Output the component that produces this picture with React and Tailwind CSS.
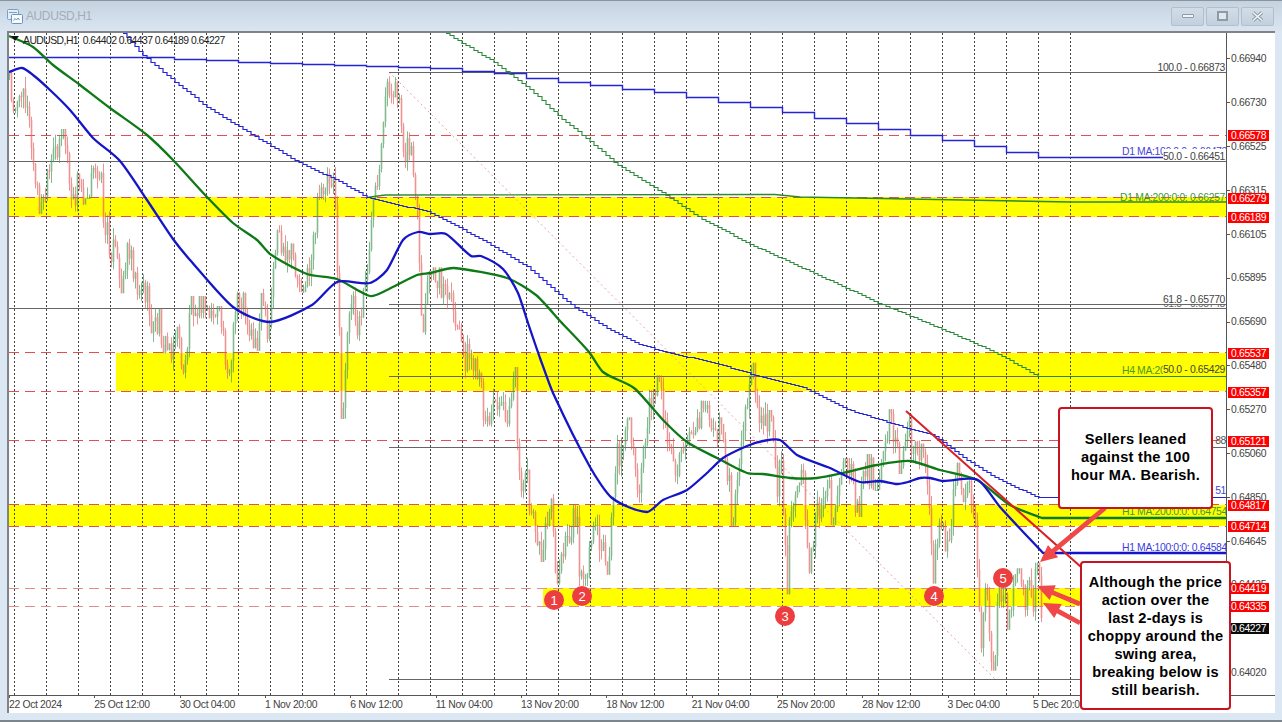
import React from "react";

const candleWay = [[9,75],[13,100],[20,110],[22,70],[27,110],[30,130],[35,185],[42,212],[50,175],[58,140],[62,132],[67,150],[70,185],[72,215],[78,180],[85,195],[93,180],[100,163],[105,235],[107,235],[117,260],[120,295],[130,240],[137,285],[145,290],[153,330],[160,320],[165,350],[170,345],[180,330],[183,388],[187,350],[190,300],[200,300],[210,315],[220,310],[230,382],[237,295],[245,305],[252,340],[258,345],[262,290],[268,352],[275,250],[278,225],[285,270],[292,250],[300,290],[308,280],[315,225],[320,200],[325,178],[335,170],[337,280],[340,340],[342,440],[347,353],[352,280],[357,340],[365,290],[372,220],[380,180],[388,72],[393,110],[398,85],[405,150],[412,150],[418,230],[422,345],[430,270],[440,280],[455,320],[462,355],[470,355],[480,390],[488,425],[500,390],[510,420],[515,350],[518,480],[527,473],[533,527],[543,563],[550,493],[557,583],[567,537],[578,507],[580,587],[590,553],[595,513],[608,573],[615,473],[620,447],[630,420],[637,503],[647,417],[657,377],[663,407],[677,497],[680,440],[693,420],[707,403],[713,433],[723,427],[733,527],[740,453],[752,363],[755,390],[763,433],[772,413],[777,487],[782,455],[787,607],[790,507],[802,463],[810,577],[818,507],[828,477],[833,523],[847,460],[860,515],[863,457],[878,487],[890,410],[900,473],[907,412],[913,460],[922,447],[930,513],[933,585],[940,507],[948,557],[957,463],[962,500],[970,483],[978,560],[982,660],[985,580],[990,640],[995,678],[997,597],[1003,588],[1008,630],[1014,590],[1020,577],[1024,610],[1028,567],[1033,620],[1037,562],[1040,590],[1043,637]];

const interp = (pts, x) => {
  if (x <= pts[0][0]) return pts[0][1];
  for (let i = 1; i < pts.length; i++) {
    if (x <= pts[i][0]) {
      const [a, b] = pts[i - 1];
      const [c, d] = pts[i];
      return b + ((d - b) * (x - a)) / (c - a);
    }
  }
  return pts[pts.length - 1][1];
};

const rnd = (i) => {
  const s = Math.sin(i * 12.9898 + 4.1) * 43758.5453;
  return s - Math.floor(s);
};

const buildCandles = () => {
  let redW = "", greenW = "", redB = "", greenB = "";
  let prev = 75;
  let i = 0;
  for (let x = 9.5; x < 1043; x += 2) {
    i++;
    let lo = Infinity, hi = -Infinity;
    for (let k = -10; k <= 10; k += 2) {
      const v = interp(candleWay, x + k);
      lo = Math.min(lo, v);
      hi = Math.max(hi, v);
    }
    const clamp = (v) => Math.min(hi + 4, Math.max(Math.max(lo - 4, 72), v));
    const c = clamp(interp(candleWay, x) + (rnd(i) - 0.5) * 34);
    const o = prev;
    const top = clamp(Math.min(o, c) - rnd(i + 500) * 12);
    const bot = clamp(Math.max(o, c) + rnd(i + 900) * 12);
    const w = `M${x} ${top.toFixed(1)}V${bot.toFixed(1)}`;
    const b = `M${x} ${Math.min(o, c).toFixed(1)}V${Math.max(Math.max(o, c), Math.min(o, c) + 1).toFixed(1)}`;
    if (c > o) { redW += w; redB += b; } else { greenW += w; greenB += b; }
    prev = c;
  }
  return { redW, greenW, redB, greenB };
};
const candles = buildCandles();

const smooth = (pts) => {
  let d = `M${pts[0][0]} ${pts[0][1]}`;
  for (let i = 0; i < pts.length - 1; i++) {
    const p0 = pts[Math.max(0, i - 1)];
    const p1 = pts[i];
    const p2 = pts[i + 1];
    const p3 = pts[Math.min(pts.length - 1, i + 2)];
    const span = Math.min(p2[0] - p1[0], 40);
    const k1 = span / (p2[0] - p0[0] || 1);
    const k2 = span / (p3[0] - p1[0] || 1);
    const c1x = p1[0] + (p2[0] - p0[0]) * k1 / 4;
    const c1y = p1[1] + (p2[1] - p0[1]) * k1 / 4;
    const c2x = p2[0] - (p3[0] - p1[0]) * k2 / 4;
    const c2y = p2[1] - (p3[1] - p1[1]) * k2 / 4;
    d += `C${c1x.toFixed(1)} ${c1y.toFixed(1)} ${c2x.toFixed(1)} ${c2y.toFixed(1)} ${p2[0]} ${p2[1]}`;
  }
  return d;
};
const stepped = (pts, start, dx, end) => {
  let d = `M${pts[0][0]} ${Math.round(interp(pts, pts[0][0])) + 0.5}`;
  for (let x = start; x < end; x += dx) {
    d += `H${x}V${Math.round(interp(pts, x)) + 0.5}`;
  }
  return d + `H${end}`;
};
const poly = (pts) => "M" + pts.map((p) => p.join(" ")).join("L");

const blueThick = [[9,72],[22,68],[33,75],[50,90],[70,110],[93,138],[120,161],[147,200],[173,239],[190,260],[233,307],[270,322],[312,305],[337,282],[370,283],[387,270],[403,240],[418,232],[430,234],[446,234],[471,256],[481,256],[503,269],[518,293],[528,323],[540,358],[553,393],[590,467],[612,498],[647,512],[663,500],[687,490],[707,473],[723,458],[747,446],[763,441],[780,440],[797,455],[830,468],[860,482],[880,481],[897,484],[908,482],[920,478],[930,478],[943,481],[978,480],[1000,507],[1043,553]];
const greenThick = [[9,36],[33,47],[53,65],[80,85],[110,108],[147,135],[173,160],[207,197],[233,223],[257,240],[270,254],[307,274],[337,279],[370,296],[387,290],[417,275],[430,273],[454,268],[507,278],[536,295],[561,322],[589,352],[603,372],[634,388],[663,420],[687,442],[717,458],[747,473],[763,474],[790,478],[817,478],[843,473],[877,465],[910,461],[940,470],[977,480],[1010,505],[1042,518]];
const blueH4 = [[123,33],[143,55],[173,80],[207,107],[253,135],[300,163],[337,180],[367,197],[430,212],[483,240],[528,267],[569,303],[610,330],[642,345],[671,353],[716,363],[756,375],[805,388],[847,409],[907,428],[933,435],[967,460],[1000,480],[1038,497],[1226,497]];
const blueD1 = [[9,57],[142.5,57],[174.5,59],[206.5,60],[238.5,62],[334.5,65],[398.5,67],[430.5,68],[462.5,70.7],[494.5,73],[526.5,77.7],[558.5,82],[590.5,85],[622.5,88.7],[654.5,92],[686.5,97],[718.5,102],[750.5,107],[782.5,112],[814.5,117.7],[846.5,122.7],[878.5,129],[910.5,135],[942.5,140],[974.5,146],[1006.5,151.7],[1038.5,157],[1226,157]];
const greenH4 = [[446,33],[491,60],[528,87],[561,118],[585,137],[618,165],[663,193],[699,217],[748,243],[814,273],[879,303],[940,328],[997,353],[1038,376],[1226,376]];
const greenD1 = [[367,197.5],[385,195],[775,194.5],[800,197],[1070,202],[1226,202]];

const gridXs = Array.from({ length: 34 }, (_, i) => 14.5 + 32 * i);
const redLines = [135.5, 197.5, 216.5, 352.5, 391.5, 440.5, 504.5, 526.5, 588.5, 606.5];

const arrow = (x1, y1, x2, y2) => {
  const L = Math.hypot(x2 - x1, y2 - y1);
  const ux = (x2 - x1) / L, uy = (y2 - y1) / L;
  const nx = -uy, ny = ux;
  const bx = x2 - ux * 17, by = y2 - uy * 17;
  const p = [
    [x1 + nx * 2.4, y1 + ny * 2.4],
    [bx + nx * 2.4, by + ny * 2.4],
    [bx + nx * 8, by + ny * 8],
    [x2, y2],
    [bx - nx * 8, by - ny * 8],
    [bx - nx * 2.4, by - ny * 2.4],
    [x1 - nx * 2.4, y1 - ny * 2.4],
  ];
  return p.map((q) => q.map((v) => v.toFixed(1)).join(",")).join(" ");
};

const badges = [[554, 600, "1"], [582, 596, "2"], [785, 616, "3"], [934, 596, "4"], [1003, 578, "5"]];

const labelCls = "font-['Liberation_Sans'] text-[10.4px] tracking-[-0.35px]";

function Chart() {
  return (
    <svg viewBox="9 33 1217 662" className="w-[1217px] h-[662px] block shrink-0">
      <rect x="9" y="197" width="1217" height="20" fill="#ffff00" />
      <rect x="116" y="353" width="1110" height="38" fill="#ffff00" />
      <rect x="9" y="505" width="1217" height="21" fill="#ffff00" />
      <rect x="543" y="588" width="683" height="18" fill="#ffff00" />

      {gridXs.map((x) => (
        <line key={x} x1={x} x2={x} y1="33" y2="695" stroke="#444" strokeWidth="1" strokeDasharray="2 2" />
      ))}
      {redLines.map((y) => (
        <line key={y} x1="9" x2="1226" y1={y} y2={y} stroke={y > 580 ? "#e88a8a" : "#e4504a"} strokeWidth="1" strokeDasharray="10 6" />
      ))}

      <line x1="389" y1="72" x2="995" y2="679" stroke="#f0a0a0" strokeWidth="1" strokeDasharray="2 3" />
      <path d="M9 161.5H1226M9 308.5H1226M389 72.5H1226M389 304.5H1226M389 376.5H1226M389 447.5H1226M389 679.5H1226" stroke="#666" strokeWidth="1" fill="none" />

      <g opacity="0.68">
        <path d={candles.greenW} stroke="#4a9c5c" strokeWidth="1" fill="none" />
        <path d={candles.redW} stroke="#e85f5f" strokeWidth="1" fill="none" />
        <path d={candles.greenB} stroke="#4a9c5c" strokeWidth="1.6" fill="none" />
        <path d={candles.redB} stroke="#e85f5f" strokeWidth="1.6" fill="none" />
      </g>

      <path d={stepped(blueD1, 14.5, 32, 1226)} stroke="#2424d6" strokeWidth="1.4" fill="none" />
      <path d={stepped(greenH4, 450, 4, 1226)} stroke="#2b8a3a" strokeWidth="1.1" fill="none" />
      <path d={poly(greenD1)} stroke="#2b8a2b" strokeWidth="1.4" fill="none" />
      <path d={stepped(blueH4, 127, 4, 1226)} stroke="#2424d6" strokeWidth="1.2" fill="none" />
      <path d={smooth(greenThick) + "H1226"} stroke="#0d7a16" strokeWidth="2.3" fill="none" strokeLinejoin="round" />
      <path d={smooth(blueThick) + "H1226"} stroke="#1515c8" strokeWidth="2.3" fill="none" strokeLinejoin="round" />
      <line x1="906" y1="411" x2="1090" y2="575" stroke="#d81f26" strokeWidth="2" />

      <polygon points="11,36 19,36 15,41" fill="#111" />
      <text x="23" y="44" className="font-['Liberation_Sans'] text-[10.4px] tracking-[-0.55px] fill-[#222]" xmlSpace="preserve">AUDUSD,H1  0.64402 0.64437 0.64189 0.64227</text>

      <text x="1225" y="71" textAnchor="end" className={`${labelCls} fill-[#444]`}>100.0 - 0.66873</text>

      <text x="1122" y="155" className={`${labelCls} fill-[#4444dd]`}>D1 MA:100:0:0: 0.66473</text>
      <rect x="1163" y="149" width="63" height="12" fill="#fff" />
      <text x="1225" y="160" textAnchor="end" className={`${labelCls} fill-[#444]`}>50.0 - 0.66451</text>

      <text x="1225" y="201" textAnchor="end" className={`${labelCls} fill-[#3c9a3c]`}>D1 MA:200:0:0: 0.66257</text>

      <text x="1225" y="307" textAnchor="end" className={`${labelCls} fill-[#666]`}>61.8 - 0.65748</text>
      <rect x="1163" y="293" width="63" height="11" fill="#fff" />
      <text x="1225" y="303" textAnchor="end" className={`${labelCls} fill-[#444]`}>61.8 - 0.65770</text>

      <text x="1122" y="374" className={`${labelCls} fill-[#4c9a1c]`}>H4 MA:20</text>
      <rect x="1163" y="364" width="63" height="11" fill="#ffff00" />
      <text x="1225" y="373" textAnchor="end" className={`${labelCls} fill-[#444]`}>50.0 - 0.65429</text>

      <text x="1226" y="444" textAnchor="end" className={`${labelCls} fill-[#555]`}>88</text>
      <text x="1226" y="494" textAnchor="end" className={`${labelCls} fill-[#4444dd]`}>51</text>
      <text x="1122" y="515" className={`${labelCls} fill-[#3c9a3c]`}>H1 MA:200:0:0: 0.64754</text>
      <text x="1122" y="551" className={`${labelCls} fill-[#3a3ae0]`}>H1 MA:100:0:0: 0.64584</text>

      <polygon points={arrow(1105, 508, 1040, 562)} fill="#f04848" />
      <polygon points={arrow(1080, 604, 1037, 586)} fill="#f04848" />
      <polygon points={arrow(1080, 623, 1043, 603)} fill="#f04848" />

      {badges.map(([cx, cy, t]) => (
        <g key={t}>
          <circle cx={cx} cy={cy} r="10" fill="#ec3e3e" />
          <text x={cx} y={cy + 4.5} textAnchor="middle" className="font-['Liberation_Sans'] text-[13px] fill-white">{t}</text>
        </g>
      ))}
    </svg>
  );
}

const axisPrices = ["0.66940","0.66730","0.66525","0.66315","0.66105","0.65895","0.65690","0.65480","0.65270","0.65060","0.64850","0.64645","0.64435","0.64230","0.64020"];

const tags = [
  ["0.66578", "top-[97px] bg-[#ff0000]"],
  ["0.66279", "top-[160px] bg-[#ff0000]"],
  ["0.66189", "top-[179px] bg-[#ff0000]"],
  ["0.65537", "top-[315px] bg-[#ff0000]"],
  ["0.65357", "top-[354px] bg-[#ff0000]"],
  ["0.65121", "top-[403px] bg-[#ff0000]"],
  ["0.64817", "top-[467px] bg-[#ff0000]"],
  ["0.64714", "top-[488px] bg-[#ff0000]"],
  ["0.64419", "top-[550px] bg-[#ff0000]"],
  ["0.64335", "top-[568px] bg-[#ff0000]"],
  ["0.64227", "top-[590px] bg-[#0a0a0a]"],
];

function PriceAxis() {
  return (
    <div className="relative w-[48px] h-[662px] pt-[4px] overflow-hidden">
      {axisPrices.map((p) => (
        <div key={p} className="h-[43.86px] flex items-center">
          <span className="w-[3px] h-px bg-[#555]" />
          <span className="ml-[1px] text-[10.4px] tracking-[-0.35px] text-[#444]">{p}</span>
        </div>
      ))}
      {tags.map(([v, cls]) => (
        <div key={v} className={`absolute left-px w-[41px] h-[11px] leading-[11px] pl-[3px] text-[10.4px] tracking-[-0.35px] text-white ${cls}`}>{v}</div>
      ))}
    </div>
  );
}

const dates = ["22 Oct 2024","25 Oct 12:00","30 Oct 04:00","1 Nov 20:00","6 Nov 12:00","11 Nov 04:00","13 Nov 20:00","18 Nov 12:00","21 Nov 04:00","25 Nov 20:00","28 Nov 12:00","3 Dec 04:00","5 Dec 20:00"];

function DateAxis() {
  return (
    <div className="flex h-[17px] overflow-hidden">
      {dates.map((d) => (
        <div key={d} className="w-[85.33px] shrink-0 flex flex-col">
          <span className="w-px h-[2px] bg-[#555]" />
          <span className="text-[10.4px] leading-[13px] tracking-[-0.35px] text-[#444] whitespace-nowrap">{d}</span>
        </div>
      ))}
    </div>
  );
}

function WinButton({ children }) {
  return (
    <div className="w-[33px] h-[19px] flex items-center justify-center rounded-[2px] border border-[#b2c0ce] bg-gradient-to-b from-[#d2dde8] to-[#c2d0de]">
      {children}
    </div>
  );
}

export default function App() {
  return (
    <div className="relative w-[1282px] h-[722px] flex flex-col overflow-hidden bg-[#dce7f4] border-t border-b-2 border-t-[#8d959c] border-b-[#7c858b] font-['Liberation_Sans',sans-serif]">
      <div className="h-[30px] flex items-center pl-[7px] pr-[8px] bg-gradient-to-b from-[#c5d3e1] to-[#dae5f1]">
        <svg width="16" height="15" viewBox="0 0 16 15" className="shrink-0">
          <rect x="0.5" y="0.5" width="11" height="10" rx="1" fill="#e4eef8" stroke="#7f9fc0" />
          <path d="M2 3.5H10" stroke="#7f9fc0" />
          <rect x="4.5" y="5.5" width="11" height="9" rx="1" fill="#f6fbff" stroke="#6c93bd" />
          <path d="M6.5 11.5l1.5-2 1.5 1.5 1.5-2 1.5 2" stroke="#6c93bd" fill="none" />
        </svg>
        <span className="ml-[3px] text-[12px] text-[#a4adb6] tracking-[-0.4px]">AUDUSD,H1</span>
        <div className="ml-auto flex gap-[2px]">
          <WinButton><span className="w-[12px] h-[4px] rounded-[1px] bg-[#f2f5f8] border border-[#8e9aa6]" /></WinButton>
          <WinButton><span className="w-[11px] h-[10px] bg-[#dfe7ef] border-2 border-[#8e9aa6]" /></WinButton>
          <WinButton>
            <svg width="13" height="11" viewBox="0 0 13 11">
              <path d="M2 1.5l9 8M11 1.5l-9 8" stroke="#8e9aa6" strokeWidth="3.6" />
              <path d="M2 1.5l9 8M11 1.5l-9 8" stroke="#f2f5f8" strokeWidth="1.6" />
            </svg>
          </WinButton>
        </div>
      </div>

      <div className="px-[7px] pb-[7px] flex-1">
        <div className="h-[682px] border-l-2 border-t-2 border-[#7f8387] bg-white flex flex-col">
          <div className="flex border-b border-[#555]">
            <div className="border-r border-[#555]">
              <Chart />
            </div>
            <PriceAxis />
          </div>
          <DateAxis />
        </div>
      </div>

      <div className="absolute left-[1058px] top-[406px] w-[155px] h-[102px] flex items-center justify-center rounded-[4px] border-2 border-[#c8141e] bg-white pb-[2px] text-center text-[14.6px] leading-[18px] font-bold tracking-[0.25px] text-black whitespace-nowrap">
        <p>Sellers leaned<br />against the 100<br />hour MA. Bearish.</p>
      </div>
      <div className="absolute left-[1080px] top-[560px] w-[151px] h-[149px] flex items-center justify-center rounded-[4px] border-2 border-[#c8141e] bg-white text-center text-[14.6px] leading-[18px] font-bold tracking-[0.25px] text-black whitespace-nowrap">
        <p>Although the price<br />action over the<br />last 2-days is<br />choppy around the<br />swing area,<br />breaking below is<br />still bearish.</p>
      </div>
    </div>
  );
}
